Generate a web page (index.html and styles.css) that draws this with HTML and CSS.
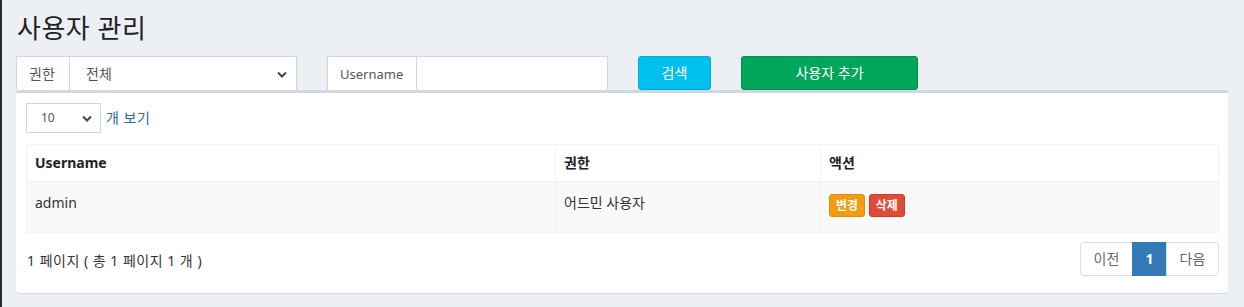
FILE: index.html
```html
<!DOCTYPE html>
<html lang="ko">
	<head>
		<meta charset="utf-8" />
		<meta name="viewport" content="width=device-width, initial-scale=1.0" />
		<title>사용자 관리</title>
		<link rel="stylesheet" href="styles.css">
	</head>
	<body>
		<div class="wrapper">
			<div class="sidebar-edge"></div>
			<main class="content">
				<h1 class="page-title">사용자 관리</h1>

				<form class="toolbar">
					<div class="input-group group-role">
						<span class="addon">권한</span>
						<div class="select-wrap">
							<select class="control">
								<option>전체</option>
							</select>
							<svg class="chevron" width="10" height="7" viewBox="0 0 10 7"><path d="M1 1.5l4 4 4-4" fill="none" stroke="#444" stroke-width="2"/></svg>
						</div>
					</div>
					<div class="input-group group-name">
						<span class="addon">Username</span>
						<input class="control" type="text" />
					</div>
					<button type="button" class="btn btn-info">검색</button>
					<button type="button" class="btn btn-success">사용자 추가</button>
				</form>

				<section class="box">
					<div class="length">
						<div class="select-wrap small">
							<select class="control">
								<option>10</option>
							</select>
							<svg class="chevron" width="10" height="7" viewBox="0 0 10 7"><path d="M1 1.5l4 4 4-4" fill="none" stroke="#444" stroke-width="2"/></svg>
						</div>
						<span class="length-label">개 보기</span>
					</div>

					<table class="table">
						<thead>
							<tr>
								<th class="col-name">Username</th>
								<th class="col-role">권한</th>
								<th>액션</th>
							</tr>
						</thead>
						<tbody>
							<tr>
								<td>admin</td>
								<td>어드민 사용자</td>
								<td>
									<span class="label label-warning">변경</span>
									<span class="label label-danger">삭제</span>
								</td>
							</tr>
						</tbody>
					</table>

					<div class="footer">
						<span class="info">1 페이지 ( 총 1 페이지 1 개 )</span>
						<ul class="pagination">
							<li><a href="#">이전</a></li>
							<li class="active"><a href="#">1</a></li>
							<li><a href="#">다음</a></li>
						</ul>
					</div>
				</section>
			</main>
		</div>
	</body>
</html>
```

FILE: styles.css
```css
* {
	box-sizing: border-box;
}

body {
	margin: 0;
	background: #ecf0f5;
	color: #333;
	font-family: 'Noto Sans', 'Noto Sans CJK KR', sans-serif;
	font-size: 14px;
	line-height: 20px;
}

.wrapper {
	display: flex;
	min-height: 307px;
}

.sidebar-edge {
	width: 2px;
	background: #222d32;
}

.content {
	flex: 1;
	padding: 11px 14px 0 14px;
}

.page-title {
	margin: 0 0 11px 1px;
	font-size: 26px;
	font-weight: 400;
	line-height: 34px;
	letter-spacing: 0.5px;
	color: #222;
}

.toolbar {
	display: flex;
	gap: 30px;
}

.input-group {
	display: flex;
	height: 34px;
	width: 281px;
	background: #fff;
	border: 1px solid #d2d6de;
	border-bottom: none;
}

.addon {
	display: flex;
	align-items: center;
	padding: 0 12px;
	border-right: 1px solid #d2d6de;
	color: #555;
}

.group-role .addon {
	width: 53px;
}

.group-name .addon {
	width: 89px;
	font-size: 13px;
}

.select-wrap {
	position: relative;
	flex: 1;
}

.control {
	width: 100%;
	height: 100%;
	border: none;
	background: #fff;
	font: inherit;
	color: #555;
	padding: 0 16px;
	appearance: none;
	outline: none;
}

.chevron {
	position: absolute;
	right: 9px;
	top: 14px;
	pointer-events: none;
}

.group-name .control {
	flex: 1;
}

.btn {
	height: 34px;
	border-radius: 3px;
	border: 1px solid transparent;
	color: #fff;
	font: inherit;
	padding: 0;
}

.btn-info {
	width: 73px;
	background: #00c0ef;
	border-color: #00acd6;
}

.btn-success {
	width: 177px;
	background: #00a65a;
	border-color: #008d4c;
}

.box {
	width: 1212px;
	background: #fff;
	border-top: 3px solid #d2d6de;
	border-radius: 3px;
	box-shadow: 0 1px 1px rgba(0, 0, 0, 0.1);
	padding: 10px 9px 10px 10px;
}

.length {
	display: flex;
	align-items: center;
	gap: 5px;
}

.select-wrap.small {
	flex: none;
	width: 75px;
	height: 30px;
	border: 1px solid #d2d6de;
}

.select-wrap.small .control {
	font-size: 12px;
	padding: 0 14px;
}

.select-wrap.small .chevron {
	top: 11px;
	right: 8px;
}

.length-label {
	color: #2c6a9e;
	letter-spacing: 0.5px;
}

.table {
	width: 100%;
	margin-top: 11px;
	border-collapse: collapse;
	border: 1px solid #f4f4f4;
}

.table th,
.table td {
	text-align: left;
	vertical-align: top;
	border: 1px solid #f4f4f4;
	padding: 8px;
}

.table th {
	height: 37px;
	border-bottom-width: 2px;
	font-weight: 700;
	color: #222;
}

.table td {
	height: 50px;
	background: #f9f9f9;
	padding-top: 10px;
}

.col-name {
	width: 529px;
}

.col-role {
	width: 265px;
}

.label {
	display: inline-block;
	color: #fff;
	font-size: 12px;
	font-weight: 700;
	line-height: 19px;
	padding: 1px 6px;
	border-radius: 3px;
	margin-top: 1px;
}

.label-warning {
	background: #f39c12;
	border: 1px solid #e08e0b;
}

.label-danger {
	background: #dd4b39;
	border: 1px solid #d73925;
	margin-left: 0;
}

.footer {
	display: flex;
	justify-content: space-between;
	align-items: center;
	padding-top: 9px;
}

.info {
	padding-left: 1px;
	margin-top: -2px;
	letter-spacing: 0.5px;
}

.pagination {
	display: flex;
	list-style: none;
	margin: 0 0 7px;
	padding: 0;
}

.pagination a {
	display: block;
	width: 53px;
	height: 34px;
	line-height: 32px;
	text-align: center;
	border: 1px solid #ddd;
	margin-left: -1px;
	color: #666;
	text-decoration: none;
	background: #fff;
}

.pagination li:first-child a {
	border-radius: 4px 0 0 4px;
	margin-left: 0;
}

.pagination li:last-child a {
	border-radius: 0 4px 4px 0;
}

.pagination .active a {
	width: 35px;
	background: #337ab7;
	border-color: #337ab7;
	color: #fff;
	font-weight: 700;
}
```
